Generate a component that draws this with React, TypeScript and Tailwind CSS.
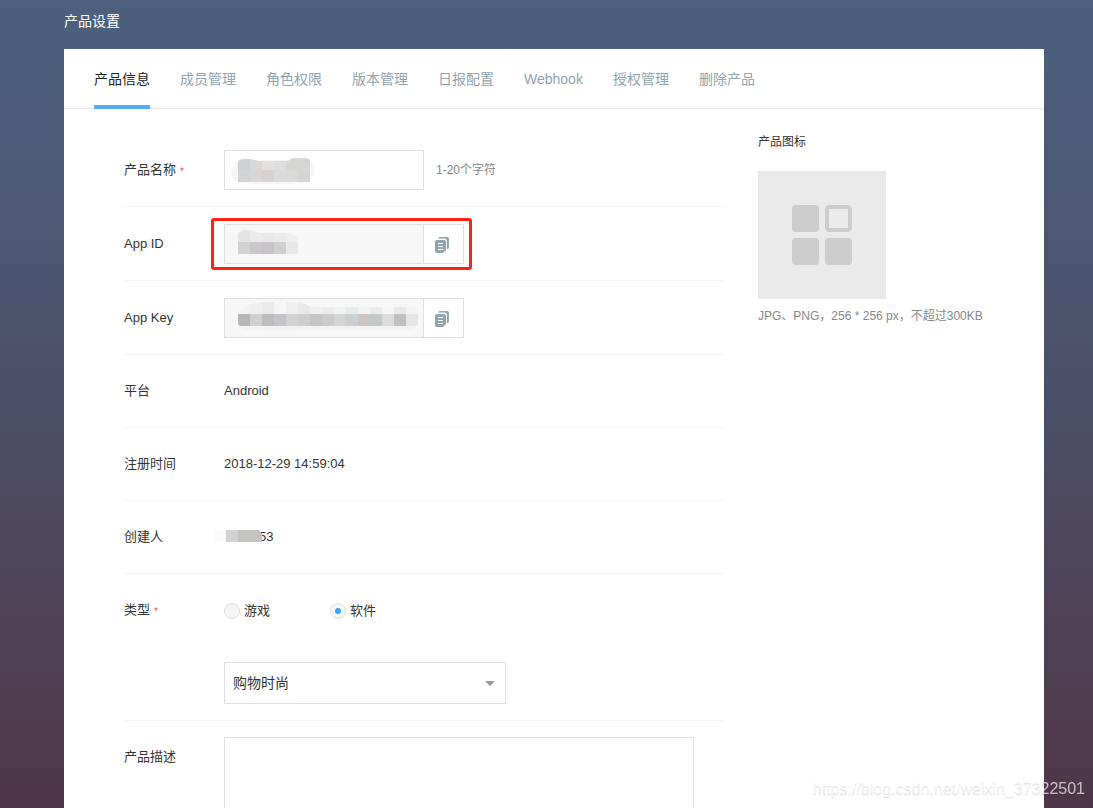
import { useState, type ReactNode } from "react";
import { clsx } from "clsx";

const TABS = [
  "产品信息",
  "成员管理",
  "角色权限",
  "版本管理",
  "日报配置",
  "Webhook",
  "授权管理",
  "删除产品",
];

const CATEGORIES = ["购物时尚", "社交通讯", "影音娱乐", "生活服务"];

const NAME_CELLS = [
  ["#cdd1d3", "#d8d8d8", "#e1e0df", "#dcdddd", "#d6d6d6", "#d6d6d5"],
  ["#d2d3d3", "#d8d7d7", "#d7d2cf", "#dadad9", "#d9d9d8", "#d5d4d2"],
];

const APP_ID_CELLS = [
  ["#e4e4e4", "#ebebeb", "#e9e9e9", "#ebebeb", "#eeeff0"],
  ["#d2d2d2", "#c9c7c9", "#c5c6c9", "#d1cfcd", "#e7e8ea"],
];

const APP_KEY_CELLS = [
  ["#f2f2f2", "#efefef", "#eaeaea", "#f6f6f6", "#efefef", "#e9e9e9", "#f1f1f1", "#ededed", "#f2f2f2", "#e9ebeb", "#f3f3f3", "#ebecec", "#f6f6f6", "#e9e9ea", "#f2f3f3"],
  ["#b9b6b7", "#ced1cf", "#c0bcbc", "#c4c5cb", "#d2d2d1", "#cfcecb", "#c6c6c6", "#cecbcd", "#d3d5d4", "#cdd0d2", "#cdc6c5", "#c4cacb", "#dcdcda", "#c2bfc1", "#e3e6e5"],
];

export default function App() {
  const [tab, setTab] = useState(TABS[0]);
  const [kind, setKind] = useState("软件");

  return (
    <div className="flex h-screen flex-col overflow-hidden bg-linear-to-b from-[#4c617e] via-[#4c5069] to-[#4f3646] font-['Liberation_Sans','Noto_Sans_CJK_SC',sans-serif] text-[13px] leading-5 text-[#333]">
      <div className="ml-16 mr-[49px] flex flex-1 flex-col">
        <h1 className="pb-[18px] pt-[11px] text-sm text-white">产品设置</h1>

        <main className="flex-1 bg-white">
          <nav className="flex h-[60px] gap-[30px] border-b border-[#e8e8e8] px-[30px] text-sm">
            {TABS.map((name) => (
              <button
                key={name}
                type="button"
                onClick={() => setTab(name)}
                className={clsx(
                  "h-[60px] border-b-4 pt-1",
                  name === tab ? "border-[#55acf6] text-[#222]" : "border-transparent text-[#90a4ae]"
                )}
              >
                {name}
              </button>
            ))}
          </nav>

          <div className="flex items-start gap-[34px] pl-[60px] pt-6">
            <form className="w-[600px]">
              <Row label="产品名称" htmlFor="name" required tall>
                <div className="relative">
                  <input id="name" className="h-10 w-[200px] border border-[#e0e0e0] px-3 outline-none" />
                  <Mosaic
                    cells={NAME_CELLS}
                    clip="M14 12q0-3 8-3t12 2h30q4-4 13-4t12 7v14q-2 4-5 4H14z"
                    id="name-mask"
                    halo="M9 17q1-7 10-7h60q12 2 12 10t-9 12q-30 5-62 1Q8 32 7 24z"
                    haloFill="#f6f6f6"
                    top={8}
                  />
                </div>
                <span className="ml-3 text-xs text-[#888]">1-20个字符</span>
              </Row>

              <Row label="App ID" htmlFor="app-id" tall>
                <div className="relative">
                  <CopyField id="app-id" />
                  <Mosaic
                    cells={APP_ID_CELLS}
                    clip="M14 10q2-4 9-4t12 3h26q9 1 13 4v17H14z"
                    id="app-id-mask"
                    top={6}
                  />
                  <span className="pointer-events-none absolute -inset-y-1.5 -left-[13px] -right-2 rounded-[3px] border-3 border-[#fe2114]" />
                </div>
              </Row>

              <Row label="App Key" htmlFor="app-key" tall>
                <div className="relative">
                  <CopyField id="app-key" />
                  <Mosaic
                    cells={APP_KEY_CELLS}
                    clip="M14 16Q24 4 40 4h34q8 1 12 5h104q4 1 4 7v8q0 4-4 4H17q-3 0-3-4z"
                    id="app-key-mask"
                    halo="M14 26h180q-2 5-8 6H84q-24 2-62 0-8-2-8-6z"
                    haloFill="#f3f3f3"
                    top={4}
                  />
                </div>
              </Row>

              <Row label="平台">Android</Row>
              <Row label="注册时间">2018-12-29 14:59:04</Row>
              <Row label="创建人">
                <div className="relative pl-[35px]">
                  53
                  <svg width="48" height="12" className="absolute -left-2.5 top-[3px]" aria-hidden="true">
                    <path d="M0 0h12v12H0z" fill="#fbfbfb" />
                    <path d="M12 0h12v12H12z" fill="#d2d3d6" />
                    <path d="M24 0h12v12H24z" fill="#c4c3bf" />
                    <path d="M36 0h9q2 2 3 5v5l-1 2H36z" fill="#c2c3c5" />
                  </svg>
                </div>
              </Row>

              <div className="flex border-b border-[#f5f5f5] py-4">
                <Label required>类型</Label>
                <div className="flex flex-col gap-[30px]">
                  <div className="flex h-[42px] items-center gap-[60px]">
                    {["游戏", "软件"].map((name) => (
                      <label key={name} className="flex items-center gap-1">
                        <input
                          type="radio"
                          name="kind"
                          checked={kind === name}
                          onChange={() => setKind(name)}
                          className="flex size-4 appearance-none items-center justify-center rounded-full border border-[#dfdfdf] bg-[#f6f6f6] before:size-1.5 before:rounded-full checked:before:bg-[#3ea4f8]"
                        />
                        {name}
                      </label>
                    ))}
                  </div>
                  <div className="relative">
                    <select
                      aria-label="分类"
                      className="h-[42px] w-[282px] appearance-none border border-[#e0e0e0] bg-white px-2 text-sm outline-none"
                    >
                      {CATEGORIES.map((name) => (
                        <option key={name}>{name}</option>
                      ))}
                    </select>
                    <svg width="10" height="5" className="pointer-events-none absolute right-[11px] top-[19px]" aria-hidden="true">
                      <path d="M0 0h10L5 5z" fill="#999" />
                    </svg>
                  </div>
                </div>
              </div>

              <div className="flex py-4">
                <Label htmlFor="description">产品描述</Label>
                <textarea id="description" className="h-[120px] w-[470px] resize-none border border-[#e0e0e0] p-3 outline-none" />
              </div>
            </form>

            <aside className="text-xs leading-[18px]">
              <h2>产品图标</h2>
              <svg width="128" height="128" className="mb-2 mt-5 bg-[#eaeaea]" role="img" aria-label="产品图标">
                <g fill="#ccc">
                  <rect x="34" y="34" width="27" height="27" rx="4" />
                  <rect x="34" y="67" width="27" height="27" rx="4" />
                  <rect x="67" y="67" width="27" height="27" rx="4" />
                </g>
                <rect x="69" y="36" width="23" height="23" rx="2.5" fill="none" stroke="#ccc" strokeWidth="4" />
              </svg>
              <p className="text-[#888]">JPG、PNG，256 * 256 px，不超过300KB</p>
            </aside>
          </div>
        </main>
      </div>

      <span className="pointer-events-none fixed bottom-2 right-2 text-base leading-[22px] text-white/70 [text-shadow:0_1px_1px_rgba(0,0,0,0.16)]">
        https://blog.csdn.net/weixin_37322501
      </span>
    </div>
  );
}

interface LabelProps {
  htmlFor?: string;
  required?: boolean;
  children: ReactNode;
}

function Label({ htmlFor, required, children }: LabelProps) {
  const Tag = htmlFor ? "label" : "span";
  return (
    <Tag htmlFor={htmlFor} className="flex h-10 w-[100px] shrink-0 items-center">
      {children}
      {required && <span className="ml-1 pt-1 text-[10px] text-[#e0526a]">*</span>}
    </Tag>
  );
}

interface RowProps {
  label: string;
  htmlFor?: string;
  required?: boolean;
  tall?: boolean;
  children: ReactNode;
}

function Row({ label, htmlFor, required, tall, children }: RowProps) {
  return (
    <div className={clsx("flex items-center border-b border-[#f5f5f5] pb-4", tall ? "pt-[17px]" : "pt-4")}>
      <Label htmlFor={htmlFor} required={required}>
        {label}
      </Label>
      {children}
    </div>
  );
}

function CopyField({ id }: { id: string }) {
  return (
    <div className="flex">
      <input id={id} readOnly className="h-10 w-[200px] border border-[#e0e0e0] bg-[#f7f7f7] px-3 outline-none" />
      <button
        type="button"
        aria-label="复制"
        className="flex size-10 items-center justify-center border border-l-0 border-[#e0e0e0] bg-white pr-1 pt-0.5"
      >
        <svg width="14" height="16" viewBox="0 0 14 16">
          <path d="M3 1.500Q3.500 0 5 0h7q2 0 2 2v8.500q0 1.500-2 1.500V4q0-2-2-2.500z" fill="#90a4ae" />
          <path d="M2 3h7q2 0 2 2v8l-3 3H2q-2 0-2-2V5q0-2 2-2z" fill="#90a4ae" />
          <path d="M3 6.500h5M3 9.500h5M3 12.500h5" stroke="#fff" />
        </svg>
      </button>
    </div>
  );
}

interface MosaicProps {
  id: string;
  cells: string[][];
  clip: string;
  halo?: string;
  haloFill?: string;
  top: number;
}

// Pixelated cover over a private value, in 12px cells
function Mosaic({ id, cells, clip, halo, haloFill, top }: MosaicProps) {
  return (
    <svg width="198" height="38" className="pointer-events-none absolute left-0 top-0" aria-hidden="true">
      <clipPath id={id}>
        <path d={clip} />
      </clipPath>
      {halo && <path d={halo} fill={haloFill} />}
      <g clipPath={`url(#${id})`} shapeRendering="crispEdges">
        {cells.map((row, r) =>
          row.map((color, c) => (
            <rect key={`${r}-${c}`} x={14 + c * 12} y={top + r * 12} width="12" height="12" fill={color} />
          ))
        )}
      </g>
    </svg>
  );
}
